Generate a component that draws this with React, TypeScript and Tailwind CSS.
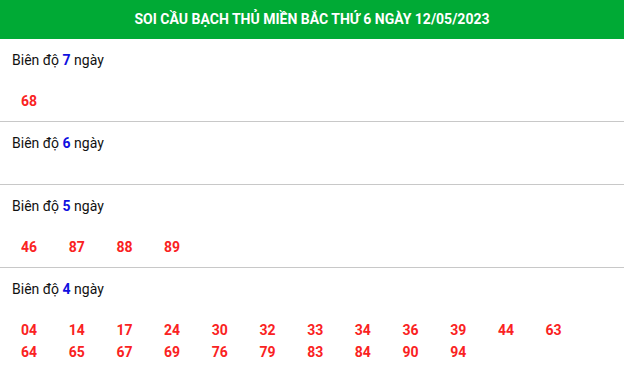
import React from 'react';

interface Range {
  days: number;
  numbers: string[];
}

const ranges: Range[] = [
  { days: 7, numbers: ['68'] },
  { days: 6, numbers: [] },
  { days: 5, numbers: ['46', '87', '88', '89'] },
  {
    days: 4,
    numbers: [
      '04', '14', '17', '24', '30', '32', '33', '34', '36', '39', '44', '63',
      '64', '65', '67', '69', '76', '79', '83', '84', '90', '94',
    ],
  },
];

function RangeRow({ range }: { range: Range }) {
  return (
    <div className="border-b border-[#c8c8c8] last:border-b-0 pt-[11px] pb-[9px] pl-[12px]">
      <p className="text-[14px] leading-5 text-[#111]">
        Biên độ <span className="font-bold text-[#1010e0]">{range.days}</span> ngày
      </p>
      <div className="mt-[20px] min-h-[2px] flex flex-wrap pl-[9px]">
        {range.numbers.map(n => (
          <span key={n} className="w-[47.7px] text-[14px] leading-[22px] font-bold text-[#fa2222]">
            {n}
          </span>
        ))}
      </div>
    </div>
  );
}

export default function App() {
  return (
    <div className="w-[624px] h-[373px] overflow-hidden bg-white font-['Roboto',sans-serif]">
      <h1 className="h-[39px] bg-[#00aa35] flex items-center justify-center text-white text-[14px] font-bold">
        SOI CẦU BẠCH THỦ MIỀN BẮC THỨ 6 NGÀY 12/05/2023
      </h1>
      {ranges.map(r => (
        <RangeRow key={r.days} range={r} />
      ))}
    </div>
  );
}
